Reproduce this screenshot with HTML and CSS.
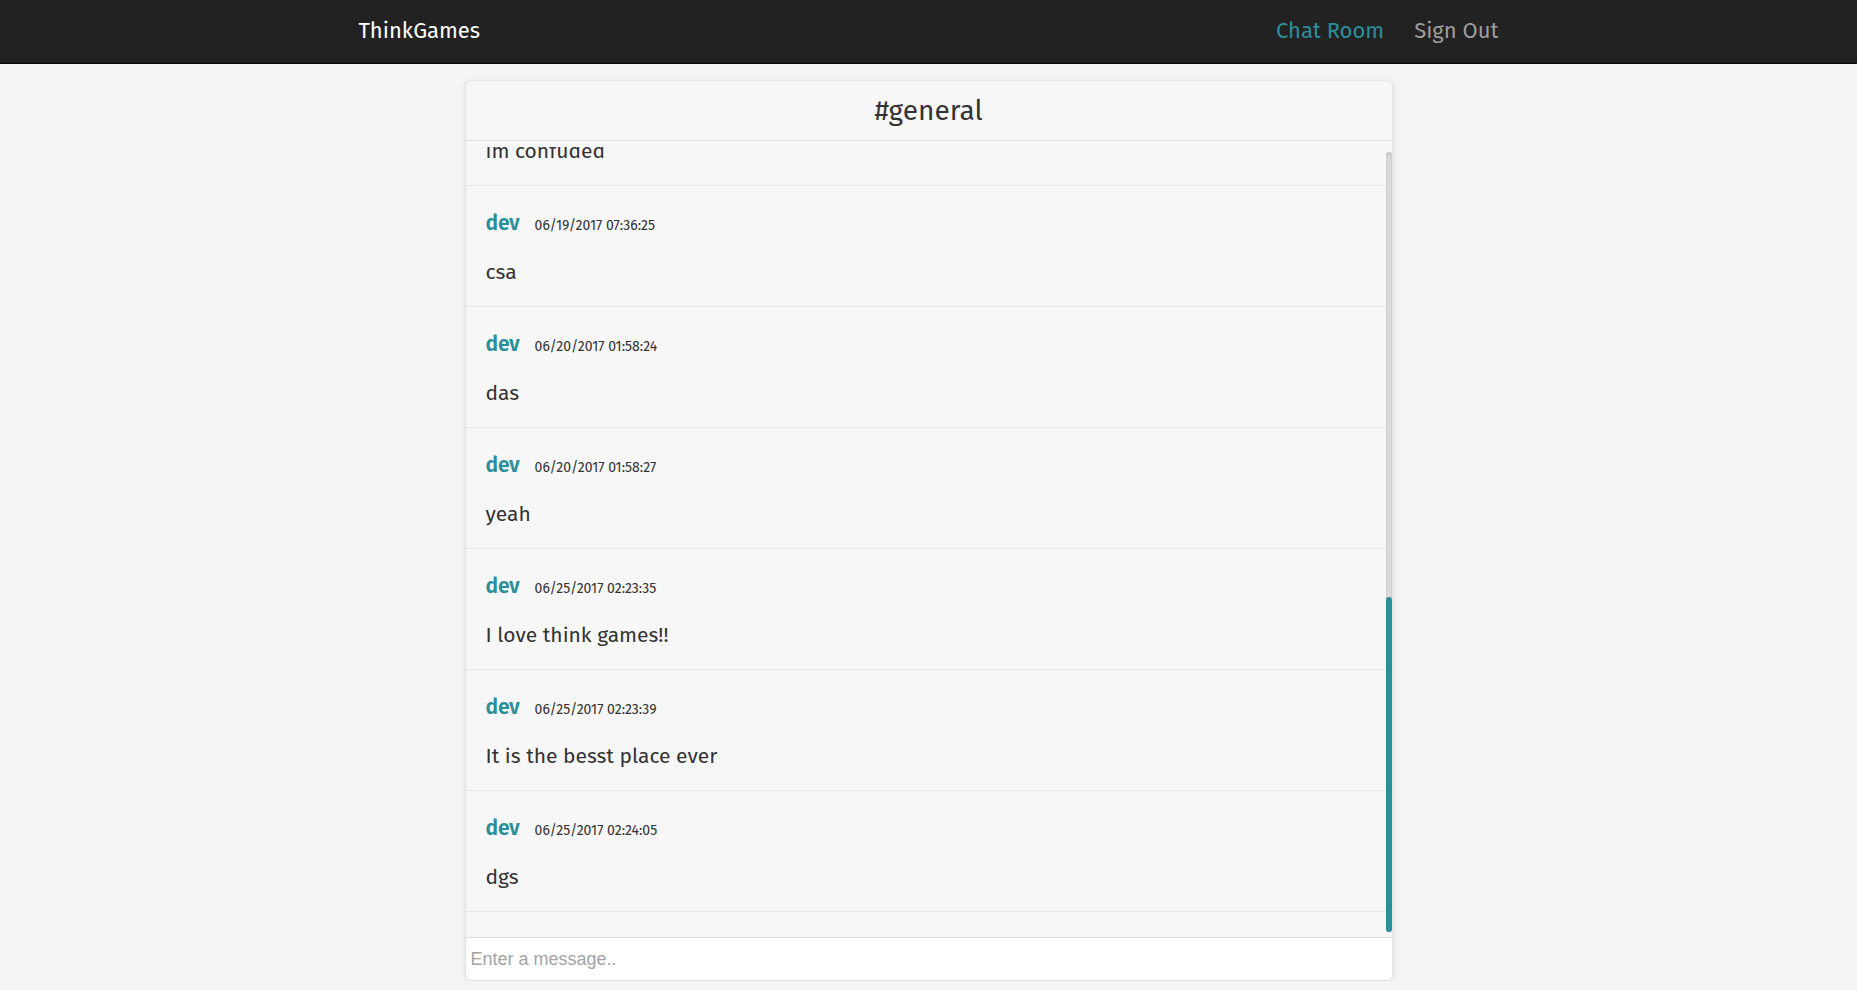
FILE: index.html
```html
<!DOCTYPE html>
<html lang="en">
<head>
<meta charset="utf-8">
<title>ThinkGames - Chat Room</title>
<link rel="stylesheet" href="styles.css">
</head>
<body>
<nav class="navbar">
  <div class="container nav-inner">
    <a class="brand" href="#">ThinkGames</a>
    <ul class="nav-links">
      <li><a class="nav-link active" href="#">Chat Room</a></li>
      <li><a class="nav-link" href="#">Sign Out</a></li>
    </ul>
  </div>
</nav>
<main class="chat-card">
  <header class="chat-header">#general</header>
  <div class="chat-body">
    <div class="chat-viewport">
      <div class="chat-list">
        <div class="msg"><div class="msg-meta"><span class="msg-user">dev</span><span class="msg-time">06/19/2017 07:35:58</span></div><p class="msg-text">im confuded</p></div>
        <div class="msg"><div class="msg-meta"><span class="msg-user">dev</span><span class="msg-time">06/19/2017 07:36:25</span></div><p class="msg-text">csa</p></div>
        <div class="msg"><div class="msg-meta"><span class="msg-user">dev</span><span class="msg-time">06/20/2017 01:58:24</span></div><p class="msg-text">das</p></div>
        <div class="msg"><div class="msg-meta"><span class="msg-user">dev</span><span class="msg-time">06/20/2017 01:58:27</span></div><p class="msg-text">yeah</p></div>
        <div class="msg"><div class="msg-meta"><span class="msg-user">dev</span><span class="msg-time">06/25/2017 02:23:35</span></div><p class="msg-text">I love think games!!</p></div>
        <div class="msg"><div class="msg-meta"><span class="msg-user">dev</span><span class="msg-time">06/25/2017 02:23:39</span></div><p class="msg-text">It is the besst place ever</p></div>
        <div class="msg"><div class="msg-meta"><span class="msg-user">dev</span><span class="msg-time">06/25/2017 02:24:05</span></div><p class="msg-text">dgs</p></div>
      </div>
    </div>
    <div class="scrollbar" aria-hidden="true">
      <div class="scrollbar-track">
        <div class="scrollbar-thumb"></div>
      </div>
    </div>
  </div>
  <form class="chat-form" onsubmit="return false;">
    <input class="chat-input" type="text" placeholder="Enter a message..">
  </form>
</main>
</body>
</html>
```
FILE: styles.css
```css
* { box-sizing: border-box; }

body {
  margin: 0;
  background: #f4f4f4;
  font-family: "Fira Sans", "Open Sans", sans-serif;
  color: #333;
}

.navbar {
  background: #222;
  border-bottom: 1px solid #080808;
  height: 64px;
}

.container {
  width: 1170px;
  margin: 0 auto;
  padding: 0 15px;
}

.nav-inner {
  display: flex;
  align-items: center;
  justify-content: space-between;
  height: 63px;
  padding-bottom: 3px;
}

.brand {
  color: #fff;
  text-decoration: none;
  font-size: 22px;
}

.nav-links {
  display: flex;
  list-style: none;
  margin: 0 -15px 0 0;
  padding: 0;
}

.nav-link {
  display: block;
  padding: 0 15px;
  color: #9d9d9d;
  text-decoration: none;
  font-size: 22px;
}

.nav-link.active { color: #2a8f9a; }

.chat-card {
  width: 928px;
  margin: 16px auto 0;
  background: #f7f7f7;
  border: 1px solid #e2e2e2;
  border-radius: 6px;
  box-shadow: 0 1px 6px rgba(0, 0, 0, 0.08);
  display: flex;
  flex-direction: column;
}

.chat-header {
  height: 60px;
  border-bottom: 1px solid #dedede;
  display: flex;
  align-items: center;
  justify-content: center;
  font-size: 28px;
  color: #333;
}

.chat-body {
  display: flex;
  height: 796px;
  padding-top: 6px;
}

.chat-viewport {
  flex: 1;
  overflow: hidden;
  display: flex;
  flex-direction: column;
  justify-content: flex-end;
}

.chat-list {
  padding-bottom: 25px;
}

.msg {
  flex: none;
  height: 121px;
  padding: 22px 20px 0;
  border-bottom: 1px solid #e6e6e6;
}

.msg-meta {
  display: flex;
  align-items: baseline;
  line-height: 30px;
}

.msg-user {
  color: #2a8f9a;
  font-size: 21px;
  font-weight: 600;
  letter-spacing: -0.2px;
}

.msg-time {
  margin-left: 15px;
  font-size: 14px;
  color: #333;
}

.msg-text {
  margin: 17px 0 0;
  font-size: 21px;
  line-height: 28px;
  color: #333;
}

.scrollbar {
  width: 6px;
  flex: none;
  padding: 5px 0;
  display: flex;
}

.scrollbar-track {
  flex: 1;
  display: flex;
  flex-direction: column;
  justify-content: flex-end;
  border-radius: 3px;
  background: #f5f5f5;
  box-shadow: inset 0 0 6px rgba(0, 0, 0, 0.3);
}

.scrollbar-thumb {
  height: 335px;
  border-radius: 3px;
  background: #2a8f9a;
}

.chat-form {
  margin: 0;
  border-top: 1px solid #dcdcdc;
}

.chat-input {
  display: block;
  width: 100%;
  height: 42px;
  border: 0;
  border-radius: 0 0 6px 6px;
  background: #fff;
  padding: 0 5px;
  font-family: "Liberation Sans", Arial, sans-serif;
  font-size: 18px;
  color: #333;
  outline: none;
}

.chat-input::placeholder { color: #a3a3a3; }
```
